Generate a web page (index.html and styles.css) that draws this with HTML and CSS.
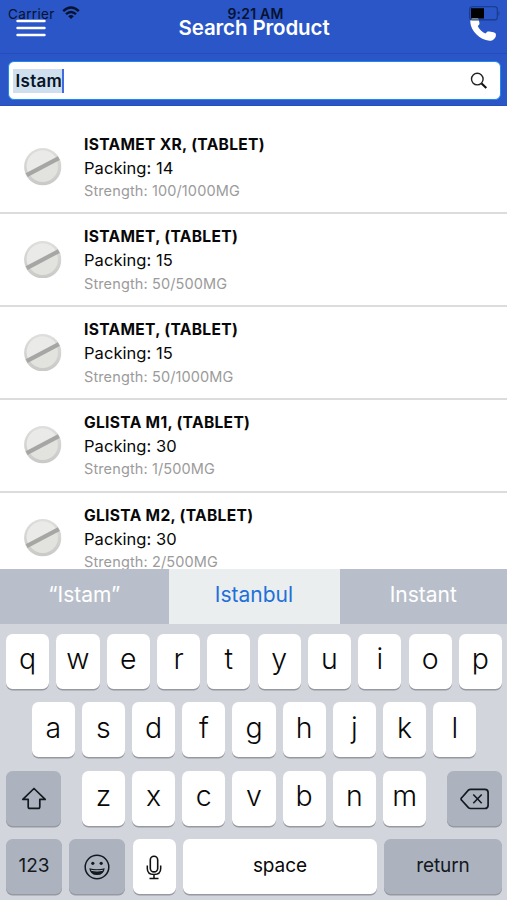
FILE: index.html
```html
<!DOCTYPE html>
<html lang="en">
<head>
<meta charset="utf-8">
<title>Search Product</title>
<link rel="stylesheet" href="styles.css">
</head>
<body>
<svg class="defs" width="0" height="0" aria-hidden="true">
  <defs>
    <linearGradient id="rim" x1="0" y1="0" x2="0" y2="1"><stop offset="0" stop-color="#dededc"/><stop offset="1" stop-color="#c9c9c7"/></linearGradient>
    <symbol id="pill" viewBox="0 0 38 38">
      <circle cx="19" cy="19" r="18.9" fill="url(#rim)"/>
      <circle cx="19" cy="19" r="15.4" fill="#e2e2df"/>
      <path d="M4.500 26A15.400 15.400 0 0 1 33 11Z" fill="#eaeae8"/>
      <path d="M2.700 27.500 35.300 10.200" stroke="#a6a6a5" stroke-width="4.200"/>
    </symbol>
  </defs>
</svg>
<div class="screen">
  <header class="header">
    <div class="status">
      <div class="carrier">Carrier
        <svg width="18" height="14" viewBox="0 0 18 14"><path d="M1.200 5.100Q9-2 16.800 5.100" fill="none" stroke="#07122e" stroke-width="2.500"/><path d="M4 8.200q5-4.400 10 0" fill="none" stroke="#07122e" stroke-width="2.400"/><path d="M6.200 10.200q2.800-2.400 5.600 0L9 13z" fill="#07122e"/></svg>
      </div>
      <div class="clock">9:21 AM</div>
      <svg class="battery" width="32" height="15" viewBox="0 0 32 15"><rect x=".7" y=".7" width="27.600" height="13.200" rx="2.500" fill="none" stroke="#193985" stroke-width="1.100"/><rect x="2" y="2.200" width="13" height="10.300" fill="#000"/><path d="M29.500 5v5q2-2.500 0-5" fill="#193985"/></svg>
    </div>
    <div class="nav">
      <svg class="menu" width="30" height="18" viewBox="0 0 30 18"><path d="M1.500 2h27M1.500 9h27M1.500 16h27" stroke="#fff" stroke-width="2.400" stroke-linecap="round"/></svg>
      <h1>Search Product</h1>
      <svg class="phone" width="27" height="26" viewBox="0 0 27 26"><path d="M1.200 3.100C2.400 1.400 4.500.5 6.500.9c1.200.3 1.900 1.400 2.200 2.700l.7 3.200c.3 1.400-.2 2.200-1.700 3.100 1.800 3.500 4.200 6 7.800 7.500 1.300-1.700 2.300-2.300 3.900-1.900l4.100.8c1.800.4 2.700 1.400 2.400 3.200-.5 3.300-3.300 5.500-6.500 5.300C9.700 24.100.6 14.500.3 6.300.2 5 .5 4 1.200 3.100Z" fill="#fff"/></svg>
    </div>
    <div class="search">
      <span class="query">Istam</span>
      <svg width="18" height="18" viewBox="0 0 18 18"><circle cx="7.300" cy="7.100" r="5.800" fill="none" stroke="#222" stroke-width="1.400"/><path d="m11.600 11.500 4.700 4.600" stroke="#111" stroke-width="2.100"/></svg>
    </div>
  </header>
  <main class="list">
    <article class="item"><svg class="pill"><use href="#pill"/></svg><div><h2>ISTAMET XR, (TABLET)</h2><p class="packing">Packing: 14</p><p class="strength">Strength: 100/1000MG</p></div></article>
    <article class="item"><svg class="pill"><use href="#pill"/></svg><div><h2>ISTAMET, (TABLET)</h2><p class="packing">Packing: 15</p><p class="strength">Strength: 50/500MG</p></div></article>
    <article class="item"><svg class="pill"><use href="#pill"/></svg><div><h2>ISTAMET, (TABLET)</h2><p class="packing">Packing: 15</p><p class="strength">Strength: 50/1000MG</p></div></article>
    <article class="item"><svg class="pill"><use href="#pill"/></svg><div><h2>GLISTA M1, (TABLET)</h2><p class="packing">Packing: 30</p><p class="strength">Strength: 1/500MG</p></div></article>
    <article class="item"><svg class="pill"><use href="#pill"/></svg><div><h2>GLISTA M2, (TABLET)</h2><p class="packing">Packing: 30</p><p class="strength">Strength: 2/500MG</p></div></article>
  </main>
  <section class="keyboard">
    <div class="suggestions"><span>“Istam”</span><span class="active">Istanbul</span><span>Instant</span></div>
    <div class="keys">
      <div class="row"><b>q</b><b>w</b><b>e</b><b>r</b><b>t</b><b>y</b><b>u</b><b>i</b><b>o</b><b>p</b></div>
      <div class="row middle"><b>a</b><b>s</b><b>d</b><b>f</b><b>g</b><b>h</b><b>j</b><b>k</b><b>l</b></div>
      <div class="row spread">
        <b class="dark side"><svg width="26" height="24" viewBox="0 0 26 24"><path d="M13 1.500 1.800 12.400h5.400v7.300q0 1.700 1.700 1.700h8.200q1.700 0 1.700-1.700v-7.300h5.400z" fill="none" stroke="#14181f" stroke-width="1.700" stroke-linejoin="round"/></svg></b>
        <div class="letters"><b>z</b><b>x</b><b>c</b><b>v</b><b>b</b><b>n</b><b>m</b></div>
        <b class="dark side"><svg width="30" height="22" viewBox="0 0 30 22"><path d="M10.600 1.300h14.200q3.300 0 3.300 3.300v12.600q0 3.300-3.300 3.300H10.600q-1.300 0-2.200-.9L1.700 12.300q-1.300-1.300 0-2.600l6.700-7.500q.9-.9 2.200-.9Z" fill="none" stroke="#14181f" stroke-width="1.700"/><path d="m13.300 6.500 8.400 8.800m0-8.800-8.400 8.800" stroke="#14181f" stroke-width="1.600"/></svg></b>
      </div>
      <div class="row words">
        <b class="dark wide">123</b>
        <b class="dark wide"><svg width="26" height="26" viewBox="0 0 26 26"><circle cx="13" cy="13" r="11.800" fill="none" stroke="#14181f" stroke-width="1.500"/><circle cx="8.800" cy="9.300" r="1.600" fill="#14181f"/><circle cx="17.200" cy="9.300" r="1.600" fill="#14181f"/><path d="M5.300 14.200q7.700 2.200 15.400 0-.7 6.800-7.700 6.800t-7.700-6.800Z" fill="#14181f"/><path d="M6.900 15.700q6.100 1.300 12.200 0l-.4 1.100q-5.700 1.200-11.400 0Z" fill="#b4bac4"/></svg></b>
        <b><svg width="16" height="25" viewBox="0 0 16 25"><rect x="4.300" y="1.300" width="7.400" height="15.600" rx="3.700" fill="none" stroke="#111" stroke-width="1.600"/><path d="M1.300 10.500v3q0 6 6.700 6t6.700-6v-3M8 19.500v4M3.500 23.500h9" fill="none" stroke="#111" stroke-width="1.500"/></svg></b>
        <b class="space">space</b>
        <b class="dark return">return</b>
      </div>
    </div>
  </section>
</div>
</body>
</html>
```
FILE: styles.css
```css
* { box-sizing: border-box; }
body { margin: 0; font-family: Inter, "Liberation Sans", sans-serif; color: #080808; background: #fff; }
svg { display: block; flex: none; }
.defs { position: absolute; }
.screen { width: 507px; height: 900px; overflow: hidden; display: flex; flex-direction: column; }

.header { position: relative; height: 106px; flex: none; background: #2a56c8; border-bottom: 1px solid #234fc0; }
.status { position: absolute; inset: 6px 6px auto 8px; height: 16px; display: grid; grid-template-columns: 1fr auto 1fr; z-index: 1; color: #07122e; font-size: 13.500px; line-height: 16px; }
.carrier { display: flex; gap: 7px; letter-spacing: .35px; }
.clock { font-size: 14px; font-weight: 600; letter-spacing: .2px; padding-left: 2px; }
.battery { justify-self: end; }
.nav { height: 54px; border-bottom: 1px solid #244dbb; display: grid; grid-template-columns: 30px 1fr 27px; padding: 0 10px 0 16px; }
.menu { margin-top: 19px; }
.nav h1 { margin: 15px 8px 0 0; color: #fff; text-align: center; font-size: 20.500px; line-height: 25px; font-weight: 600; letter-spacing: -.12px; }
.phone { margin-top: 16px; }
.search { margin: 7px 6.500px 0 7.500px; height: 39px; border: 1.500px solid #1d8be8; border-radius: 6px; background: #fff; display: flex; align-items: center; justify-content: space-between; padding: 0 12px 0 4px; }
.query { height: 24px; line-height: 24px; padding-left: 3px; background: #cfdfed; border-right: 2px solid #426be0; font-size: 17px; font-weight: 600; letter-spacing: .3px; color: #081426; }

.list { height: 463px; flex: none; padding-top: 15.500px; overflow: hidden; }
.item { height: 92.800px; border-bottom: 2px solid #dcdcdd; padding: 11px 0 0 24px; display: flex; gap: 22.500px; }
.pill { width: 37.500px; height: 37.500px; margin-top: 15.500px; }
.item h2, .item p { margin: 0; white-space: nowrap; }
.item h2 { font-size: 15.600px; line-height: 24px; font-weight: 700; letter-spacing: .3px; }
.packing { font-size: 16.500px; line-height: 22.500px; letter-spacing: .05px; }
.strength { font-size: 14.500px; line-height: 24px; color: #9b9b9b; letter-spacing: .12px; }

.keyboard { height: 331px; flex: none; background: #d2d5db; }
.suggestions { height: 55px; display: grid; grid-template-columns: 168.500px 171px 1fr; text-align: center; font-size: 21px; line-height: 51px; color: #fff; background: #b9bfca; }
.suggestions .active { color: #1f70d8; background: #ebeeef; }
.keys { padding: 9.500px 5px 0 6px; display: flex; flex-direction: column; gap: 13px; }
.row, .letters { display: flex; justify-content: space-between; gap: 7.200px; }
.row { height: 55.500px; }
.middle { justify-content: center; }
b { width: 43.200px; height: 55px; flex: none; display: flex; align-items: center; justify-content: center; padding-bottom: 3px; border-radius: 6.500px; background: #fff; box-shadow: 0 1.500px 0 #96999f; font-size: 28.500px; line-height: 1; font-weight: 350; }
.row, .letters { gap: 7px; }
.dark { background: #acb3be; color: #14181f; }
.side { width: 55px; }
.words b { font-size: 19px; font-weight: 400; letter-spacing: -.1px; }
.side, .words b:has(svg) { padding: 1px 0 0; }
.words .wide { width: 56px; }
.words .space { width: 193.500px; }
.words .return { width: 118px; }
```
